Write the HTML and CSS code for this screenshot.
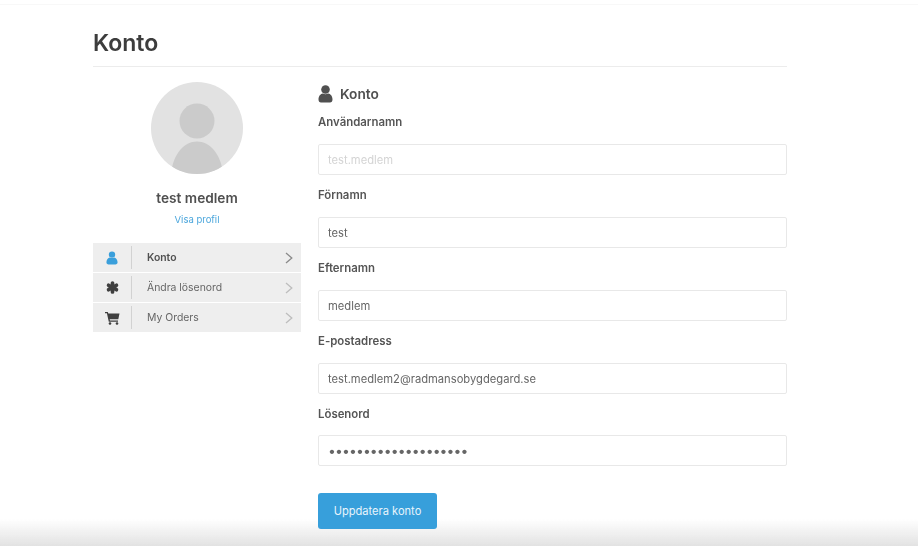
FILE: index.html
```html
<!DOCTYPE html>
<html lang="sv">
<head>
<meta charset="utf-8">
<title>Konto</title>
<link rel="stylesheet" href="styles.css">
</head>
<body>
<div class="topline"></div>
<div class="fade"></div>
<div class="page">
  <h1 class="title">Konto</h1>
  <div class="columns">
    <aside class="side">
      <svg class="avatar" viewBox="0 0 92 92" width="92" height="92">
        <defs><clipPath id="c"><circle cx="46" cy="46" r="46"/></clipPath></defs>
        <circle cx="46" cy="46" r="46" fill="#e2e2e2"/>
        <g clip-path="url(#c)" fill="#cbcbcb">
          <circle cx="46" cy="39" r="17.500"/>
          <path d="M20 92 C22 72 33 59.500 46 59.500 C59 59.500 70 72 72 92 Z"/>
        </g>
      </svg>
      <div class="name">test medlem</div>
      <a class="view" href="#">Visa profil</a>
      <nav class="menu">
        <a class="item active" href="#">
          <span class="ico"><svg viewBox="0 0 14 16" width="12" height="14"><circle cx="7" cy="4" r="3.700" fill="currentColor"/><path d="M0.500 13 C0.500 9.500 2.500 7.500 4.500 7.300 C6 8.300 8 8.300 9.500 7.300 C11.500 7.500 13.500 9.500 13.500 13 C13.500 14.500 12.500 15.500 11 15.500 H3 C1.500 15.500 0.500 14.500 0.500 13 Z" fill="currentColor"/></svg></span>
          <span class="label">Konto</span>
          <svg class="chev" viewBox="0 0 8 12" width="8" height="12"><path d="M1 1 L6.800 6 L1 11" fill="none" stroke="currentColor" stroke-width="1.300"/></svg>
        </a>
        <a class="item" href="#">
          <span class="ico"><svg viewBox="0 0 14 14" width="13" height="13"><g stroke="currentColor" stroke-width="4" stroke-linecap="round"><path d="M7 2.200 V11.800"/><path d="M2.800 4.600 L11.200 9.400"/><path d="M2.800 9.400 L11.200 4.600"/></g></svg></span>
          <span class="label">Ändra lösenord</span>
          <svg class="chev" viewBox="0 0 8 12" width="8" height="12"><path d="M1 1 L6.800 6 L1 11" fill="none" stroke="currentColor" stroke-width="1.300"/></svg>
        </a>
        <a class="item" href="#">
          <span class="ico"><svg viewBox="0 0 15 14" width="15" height="14"><path d="M0 1 H2.800 L3.300 2.600 H14.500 L13.300 8.200 H4.700 L5 9.500 H13 V10.800 H3.800 L1.900 2.300 H0 Z" fill="currentColor"/><circle cx="5" cy="12.500" r="1.300" fill="currentColor"/><circle cx="12" cy="12.500" r="1.300" fill="currentColor"/></svg></span>
          <span class="label">My Orders</span>
          <svg class="chev" viewBox="0 0 8 12" width="8" height="12"><path d="M1 1 L6.800 6 L1 11" fill="none" stroke="currentColor" stroke-width="1.300"/></svg>
        </a>
      </nav>
    </aside>
    <main class="main">
      <h2 class="heading">
        <svg viewBox="0 0 15 18" width="15" height="18"><circle cx="7.500" cy="4.500" r="4.300" fill="currentColor"/><path d="M0.500 14.500 C0.500 11 2.500 8.700 4.800 8.400 C6.500 9.500 8.500 9.500 10.200 8.400 C12.500 8.700 14.500 11 14.500 14.500 C14.500 16.500 13.500 17.500 12 17.500 H3 C1.500 17.500 0.500 16.500 0.500 14.500 Z" fill="currentColor"/></svg>
        Konto
      </h2>
      <form class="form">
        <div class="field"><label class="lab">Användarnamn</label><input class="input" disabled placeholder="test.medlem"></div>
        <div class="field"><label class="lab">Förnamn</label><input class="input" value="test"></div>
        <div class="field"><label class="lab">Efternamn</label><input class="input" value="medlem"></div>
        <div class="field"><label class="lab">E-postadress</label><input class="input" value="test.medlem2@radmansobygdegard.se"></div>
        <div class="field"><label class="lab short">Lösenord</label><input class="input pass" type="password" value="aaaaaaaaaaaaaaaaaaaa"></div>
        <button class="btn" type="button">Uppdatera konto</button>
      </form>
    </main>
  </div>
</div>
</body>
</html>
```

FILE: styles.css
```css
html, body { margin: 0; padding: 0; height: 100%; overflow: hidden; background: #fff; }
body { font-family: Inter, "Liberation Sans", sans-serif; color: #555; }
a { text-decoration: none; color: inherit; }
.page { position: relative; width: 694px; margin-left: 93px; padding-top: 29px; }
.title { margin: 0; height: 37px; border-bottom: 1px solid #ececec; font-size: 23px; line-height: 28px; font-weight: 600; color: #3d3d3d; }
.columns { display: flex; gap: 17px; padding-top: 15px; }
.side { width: 208px; flex: none; display: flex; flex-direction: column; align-items: center; }
.avatar { display: block; }
.name { margin-top: 15px; font-size: 13.700px; line-height: 18px; font-weight: 600; color: #505050; }
.view { margin-top: 6px; margin-bottom: -1px; font-size: 9.500px; line-height: 14px; color: #4ba6dc; }
.menu { margin-top: 17px; width: 100%; display: flex; flex-direction: column; gap: 1px; }
.item { display: flex; align-items: center; height: 29px; background: #eeeeee; color: #666; font-size: 10.400px; }
.ico { width: 38px; height: 23px; flex: none; border-right: 1px solid #d2d2d2; display: flex; align-items: center; justify-content: center; color: #3f3f3f; }
.ico svg { display: block; }
.label { flex: 1; padding-left: 15px; }
.chev { margin-right: 8px; color: #bdbdbd; }
.active .ico { color: #3a9fdb; }
.active .label { font-weight: 600; color: #505050; }
.active .chev { color: #8a8a8a; }
.main { flex: 1; min-width: 0; }
.heading { margin: 3px 0 0; display: flex; align-items: center; gap: 7px; height: 18px; font-size: 13.700px; line-height: 18px; font-weight: 600; color: #505050; }
.form { display: flex; flex-direction: column; margin-top: 9px; }
.field { display: flex; flex-direction: column; margin-bottom: 10px; }
.lab { height: 32px; padding-top: 3px; box-sizing: border-box; font-size: 11.400px; line-height: 14px; font-weight: 600; color: #555; }
.short { height: 31px; }
.input { box-sizing: border-box; height: 31px; width: 100%; margin: 0; padding: 0 9px; border: 1px solid #e8e8e8; border-radius: 2px; background: #fff; font-family: inherit; font-size: 11.200px; color: #666; outline: none; }
.input::placeholder { color: #d4d4d4; opacity: 1; }
.pass { font-size: 14px; letter-spacing: -0.900px; }
.btn { width: 119px; height: 36px; margin-top: 17px; border: 0; border-radius: 3px; background: #379fdb; color: #e8f4fb; font-family: inherit; font-size: 11.100px; padding: 0; }
.topline { position: fixed; left: 0; right: 0; top: 4px; height: 1px; background: #f8f8f8; }
.fade { position: fixed; left: 0; right: 0; bottom: 0; height: 27px; background: linear-gradient(rgba(225,225,225,0), #e2e2e2); pointer-events: none; }
```
